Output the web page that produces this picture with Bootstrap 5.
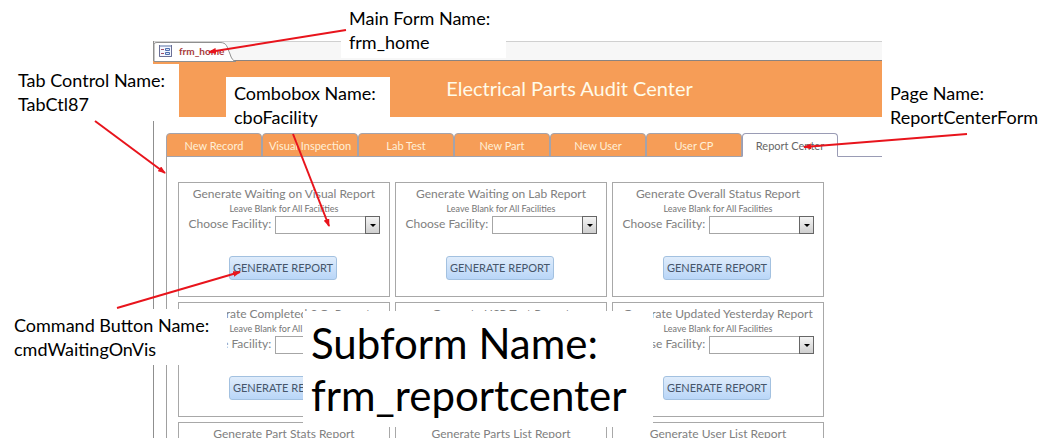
<!DOCTYPE html>
<html lang="en">
<head>
<meta charset="utf-8">
<meta name="viewport" content="width=device-width, initial-scale=1">
<title>Electrical Parts Audit Center</title>
<link href="https://cdn.jsdelivr.net/npm/bootstrap@5.3.0/dist/css/bootstrap.min.css" rel="stylesheet">
<style>
body { font-family: Lato, "Open Sans", sans-serif; color: #000; }
.stage { height: 100vh; }
.app-window { margin: 41px 167px 0 153px; border-left: 1px solid #8f8f8f; }
.doc-strip { height: 20px; background: #f7f7f7; border-top: 1px solid #d0d0d0; border-bottom: 1px solid #8a8380; }
.doc-tab { width: 82px; }
.doc-tab a { font-size: 10px; line-height: 18px; color: #a83c3c; margin-left: 25px; }
.doc-tab svg { left: 0; top: -1px; }
.banner { height: 56px; margin-left: -1px; padding-left: 104px; padding-bottom: 2px; background: #f69d57; color: #fffbe9; }
.banner h1 { font-size: 20px; line-height: 24px; }
.page-tabs { margin: 16px 0 0 12px; border-bottom: 1px solid #9a9cb5; }
.page-tabs .nav-link { width: 96px; height: 24px; margin-bottom: -1px; padding: 0; border: 1px solid #a3a3ac; border-radius: 4px 4px 0 0; font-size: 11px; line-height: 23px; text-align: center; white-space: nowrap; background: #f69d57; color: #fff0d8; }
.page-tabs .nav-link.active { background: #fff; color: #666; border-color: #9a9cb5; border-bottom-color: #fff; }
.page-body { margin-left: 12px; padding: 25px 0 0 11px; border-left: 1px solid #a0a0a0; }
.report-grid { display: grid; grid-template-columns: repeat(3, 212px); gap: 5px; }
.report { height: 115px; border: 1px solid #a8a8a8; color: #808080; }
.report h2 { font-size: 12px; line-height: 16px; margin: 3px 0 0; }
.report .hint { font-size: 9px; line-height: 12px; margin: 1px 0 1px; color: #747474; }
.report label { font-size: 12px; line-height: 16px; width: 86px; }
.report select { width: 105px; height: 18px; appearance: none; border: 1px solid #a6a6a6; border-radius: 0; background: #fff; }
.drop { right: 0; top: 0; width: 15px; height: 18px; border: 1px solid #666; background: linear-gradient(#f4f4f4, #cfcfcf); pointer-events: none; }
.report button { width: 108px; height: 24px; margin: 22px 2px 0 0; padding: 0; border: 1px solid #a3c1e0; border-radius: 3px; background: linear-gradient(#dfecfb, #b9d6f8); color: #46566a; font-size: 11px; line-height: 22px; }
.note { background: #fff; font-size: 18px; line-height: 24px; white-space: nowrap; }
.note-main { left: 341px; top: 0; width: 165px; padding: 6px 0 4px 8px; }
.note-tab { left: 0; top: 64px; width: 179px; padding: 4px 0 5px 18px; }
.note-combo { left: 226px; top: 77px; width: 164px; padding: 4px 0 4px 8px; }
.note-page { left: 882px; top: 77px; padding: 4px 0 4px 8px; }
.note-cmd { left: 0; top: 309px; width: 227px; padding: 4px 0 4px 14px; }
.note-sub { left: 303px; top: 311px; width: 350px; padding: 6px 0 6px 8px; font-size: 42px; line-height: 52px; }
.arrows { pointer-events: none; }
</style>
</head>
<body>
<svg width="0" height="0" class="position-absolute"><defs>
<symbol id="caret" viewBox="0 0 13 16"><path d="M4 7h6L7 10z" fill="#000"/></symbol>
</defs></svg>
<main class="stage position-relative overflow-hidden">
  <section class="app-window">
    <div class="doc-strip">
      <div class="doc-tab position-relative">
        <svg class="position-absolute" width="84" height="21" viewBox="0 0 84 21">
          <path d="M0 20V3Q0 1.500 3 1.500H66C73 1.500 73 6 76 13Q78 20 82 20.500H0Z" fill="#fff" stroke="#8f8f8f"/>
          <rect x="5" y="4" width="13" height="12" fill="#a9b6d2"/><rect x="6" y="6" width="11" height="9" fill="#f4f7ff"/>
          <path d="M5.500 4V15.500H17.500V4" fill="none" stroke="#6a6f96"/>
          <path d="M7 8.500h3M7 12.500h3" stroke="#a05068"/><path d="M11.500 7.500h4v2h-4zM11.500 11.500h4v2h-4z" fill="#d6e2f8" stroke="#4f6fae"/>
        </svg>
        <a href="#" class="position-relative d-block text-decoration-none fw-bold">frm_home</a>
      </div>
    </div>
    <header class="banner d-flex align-items-center justify-content-center"><h1 class="m-0 fw-normal">Electrical Parts Audit Center</h1></header>
    <nav class="page-tabs nav flex-nowrap">
      <a class="nav-link" href="#">New Record</a>
      <a class="nav-link" href="#">Visual Inspection</a>
      <a class="nav-link" href="#">Lab Test</a>
      <a class="nav-link" href="#">New Part</a>
      <a class="nav-link" href="#">New User</a>
      <a class="nav-link" href="#">User CP</a>
      <a class="nav-link active" href="#" aria-current="page">Report Center</a>
    </nav>
    <div class="page-body"><div class="report-grid" id="reports"></div></div>
  </section>

  <p class="note note-main position-absolute m-0">Main Form Name:<br>frm_home</p>
  <p class="note note-tab position-absolute m-0">Tab Control Name:<br>TabCtl87</p>
  <p class="note note-combo position-absolute m-0">Combobox Name:<br>cboFacility</p>
  <p class="note note-page position-absolute m-0">Page Name:<br>ReportCenterForm</p>
  <p class="note note-cmd position-absolute m-0">Command Button Name:<br>cmdWaitingOnVis</p>
  <p class="note note-sub position-absolute m-0">Subform Name:<br>frm_reportcenter</p>

  <svg class="arrows position-absolute top-0 start-0" width="1049" height="438" aria-hidden="true">
    <defs><marker id="tip" markerUnits="userSpaceOnUse" markerWidth="8" markerHeight="6" refX="7" refY="3" orient="auto"><path d="M0 0L8 3L0 6z" fill="#e8141c"/></marker></defs>
    <g stroke="#e8141c" stroke-width="2">
      <line x1="346" y1="30" x2="209" y2="52" marker-end="url(#tip)"/>
      <line x1="95" y1="121" x2="165" y2="173" marker-end="url(#tip)"/>
      <line x1="293" y1="134" x2="329" y2="226" marker-end="url(#tip)"/>
      <line x1="967" y1="134" x2="804" y2="147" marker-end="url(#tip)"/>
      <line x1="117" y1="308" x2="240" y2="272" marker-end="url(#tip)"/>
    </g>
  </svg>
</main>
<script>
const titles = ["Waiting on Visual", "Waiting on Lab", "Overall Status", "Completed S.O.", "USR Test", "Updated Yesterday", "Part Stats", "Parts List", "User List"];
document.getElementById("reports").innerHTML = titles.map((t, i) => `
  <form class="report text-center">
    <h2 class="fw-normal">Generate ${t} Report</h2>
    <p class="hint">Leave Blank for All Facilities</p>
    <div class="d-flex justify-content-center">
      <label for="facility${i}" class="text-start">Choose Facility:</label>
      <div class="position-relative d-flex"><select id="facility${i}"><option></option></select>
      <span class="drop position-absolute"><svg class="d-block" width="13" height="16"><use href="#caret"/></svg></span></div>
    </div>
    <button type="button">GENERATE REPORT</button>
  </form>`).join("");
</script>
<script src="https://cdn.jsdelivr.net/npm/bootstrap@5.3.0/dist/js/bootstrap.bundle.min.js"></script>
</body>
</html>
